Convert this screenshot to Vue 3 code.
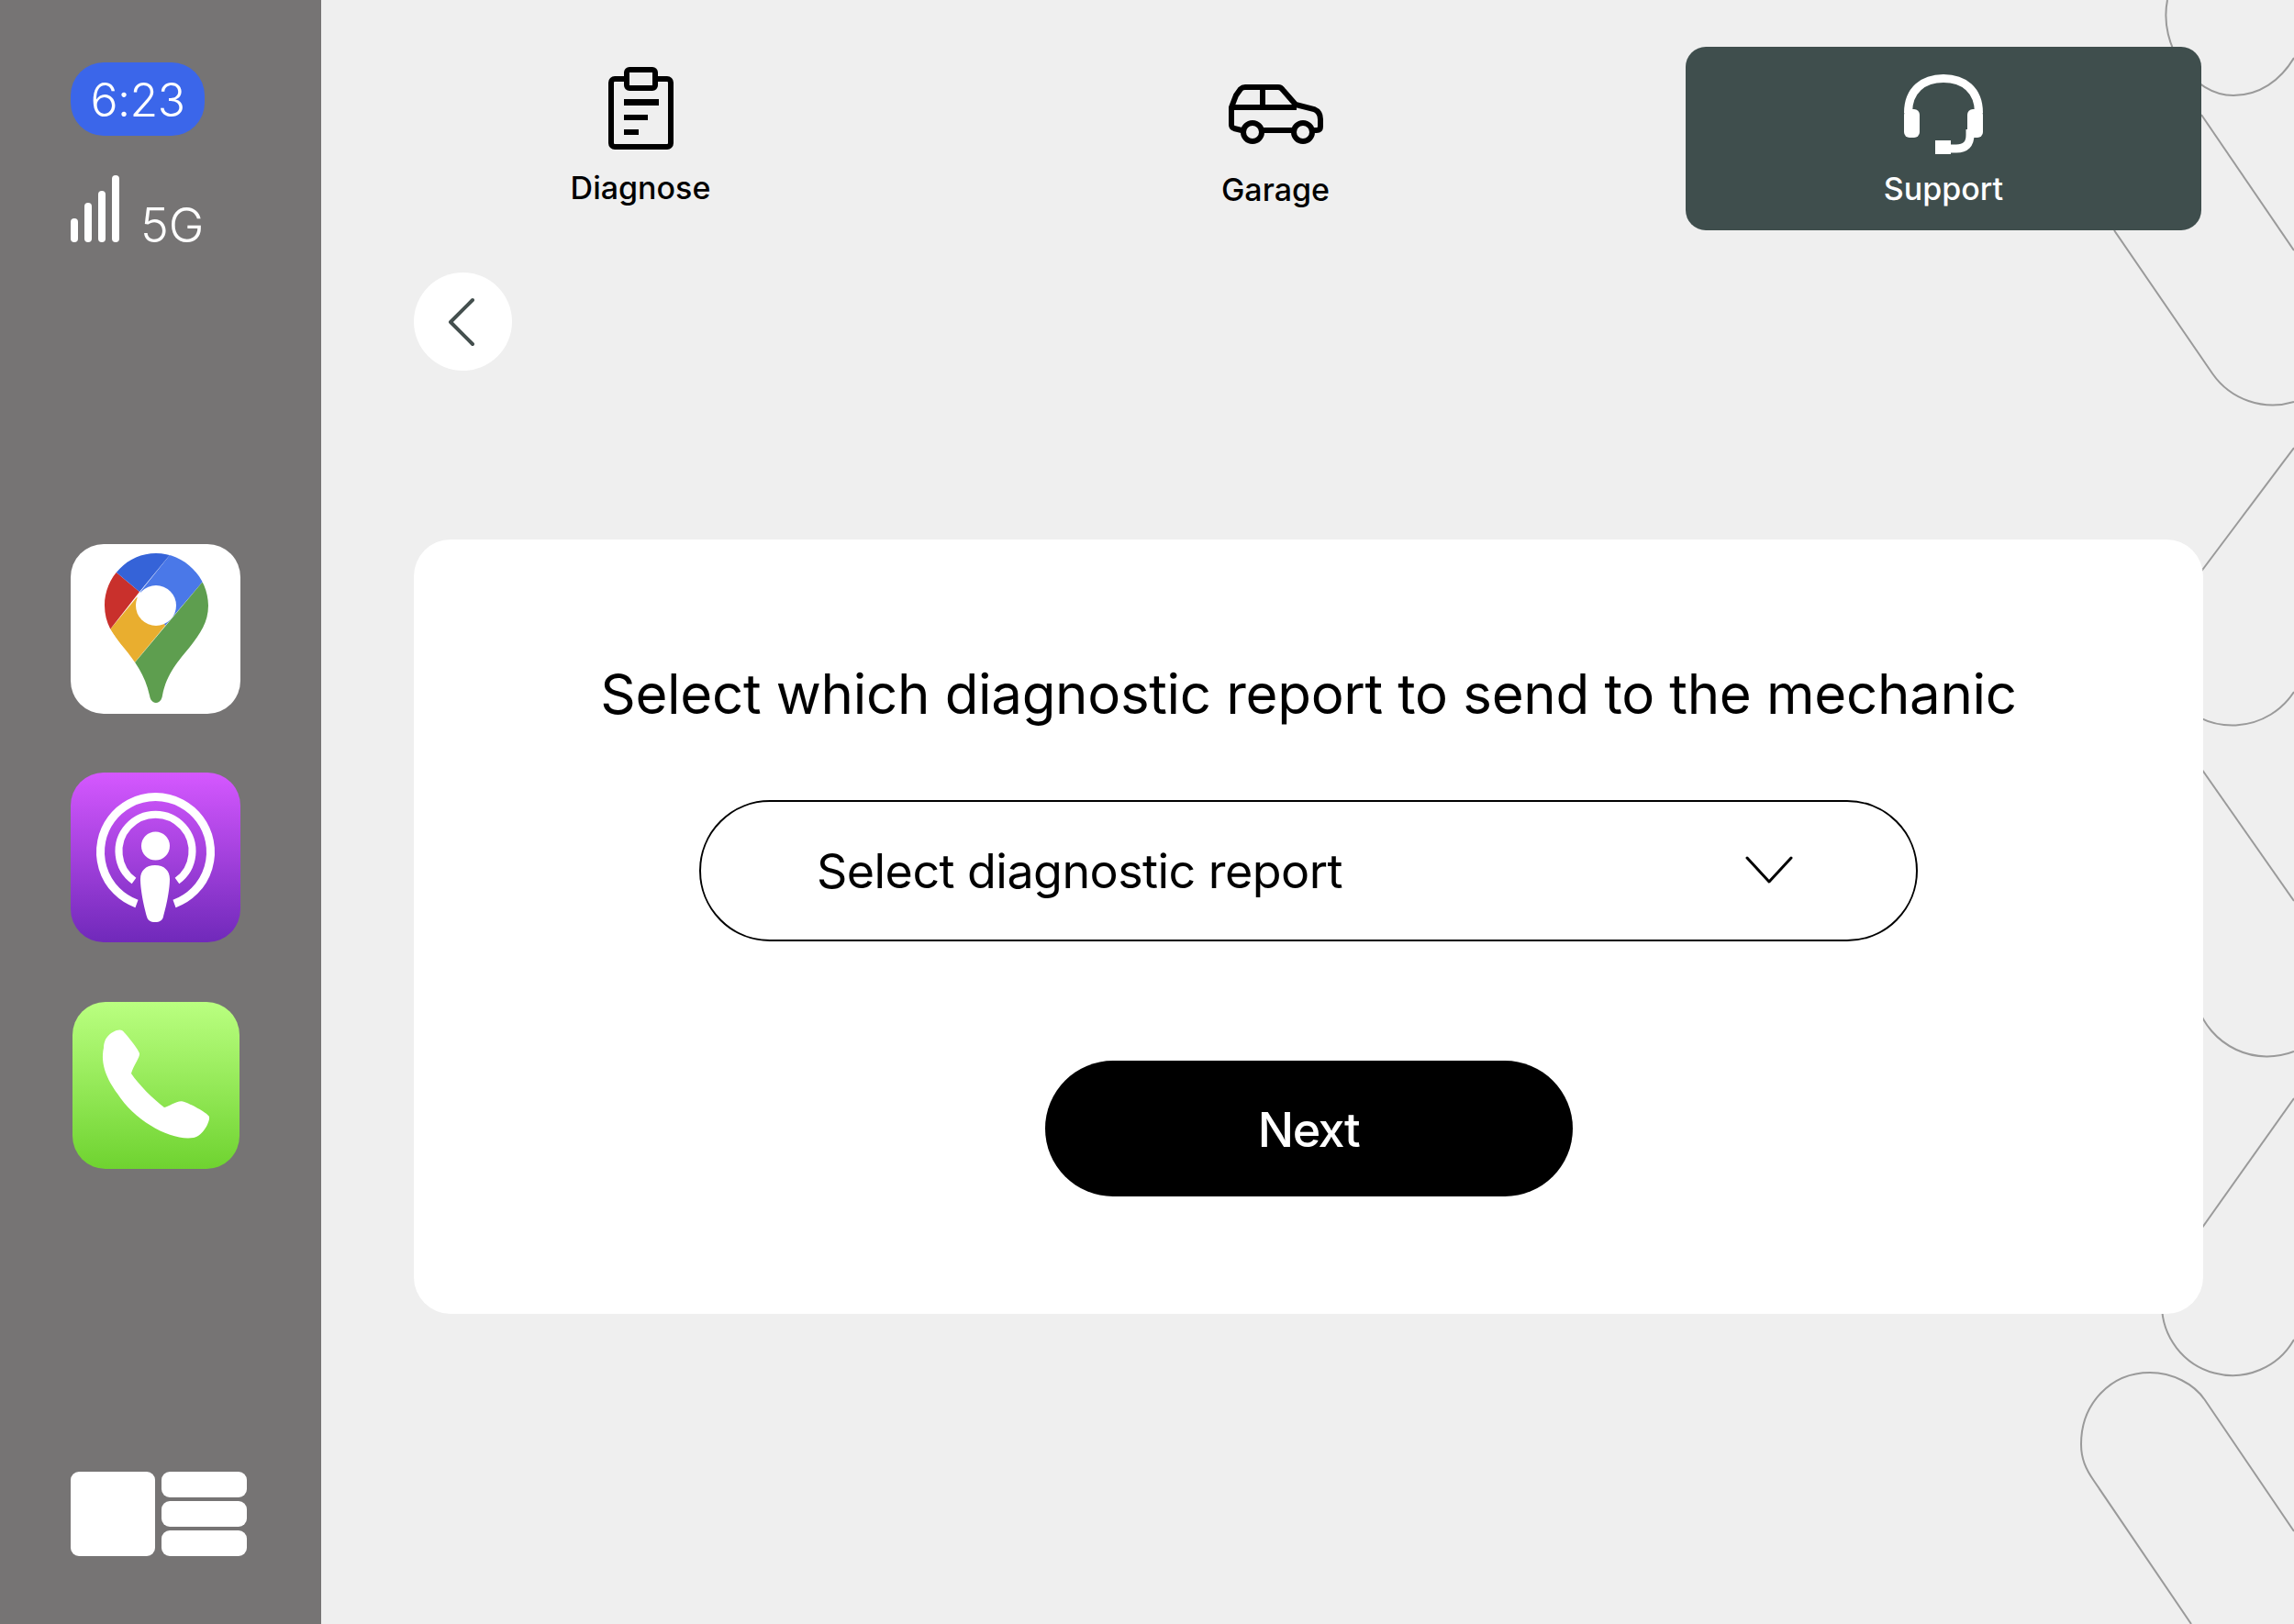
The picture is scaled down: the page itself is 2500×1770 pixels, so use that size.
<template>
  <div class="screen">
    <!-- decorative outlines behind everything -->
    <svg class="bg-lines" viewBox="0 0 2500 1770" fill="none" stroke="#9a9a9a" stroke-width="2">
      <path d="M2362 0 C2352 50 2390 104 2434 104 C2462 104 2485 88 2500 63" />
      <path d="M2304 251 L2411 407 A80 80 0 0 0 2500 438" />
      <path d="M2399 125 L2500 273" />
      <path d="M2395 628 L2500 488" />
      <path d="M2370 760 A80 80 0 0 0 2500 754" />
      <path d="M2395 832 L2500 982" />
      <path d="M2395 1097 A80 80 0 0 0 2500 1146" />
      <path d="M2395 1345 L2500 1197" />
      <path d="M2356 1422 A77 77 0 0 0 2500 1460" />
      <path d="M2500 1669 L2403 1526 C2391 1508 2367 1496 2343 1496 C2300 1496 2268 1530 2268 1574 C2268 1590 2273 1601 2282 1614 L2388 1770" />
    </svg>

    <aside class="sidebar">
      <div class="time">6:23</div>
      <div class="signal">
        <div class="bars">
          <span class="bar b1"></span>
          <span class="bar b2"></span>
          <span class="bar b3"></span>
          <span class="bar b4"></span>
        </div>
        <span class="net">5G</span>
      </div>

      <div class="app app-maps">
        <svg viewBox="0 0 185 185" width="185" height="185">
          <defs>
            <clipPath id="pin">
              <path d="M93 10 C124 10 150 36 150 67 C150 85 141 98 130 112 C118 127 105 140 100 165 C99 171 96 173 93 173 C90 173 87 171 86 165 C81 142 70 128 58 113 C46 99 37 86 37 67 C37 36 62 10 93 10 Z" />
            </clipPath>
          </defs>
          <g clip-path="url(#pin)">
            <polygon points="108,12 76,52 103,89 143,42 160,30 160,0 108,0" fill="#4a78e8" />
            <polygon points="72,58 43,93 69,130 103,89 93,67" fill="#e9ae2f" />
            <polygon points="50,31 75,52 43,93 20,90 20,20" fill="#c9302c" />
            <polygon points="50,31 75,52 108,12 108,0 30,0" fill="#3563d8" />
            <polygon points="143,42 60,141 60,200 170,200 170,40" fill="#5e9e4f" />
          </g>
          <circle cx="93" cy="67" r="22" fill="#fff" />
        </svg>
      </div>

      <div class="app app-podcast">
        <svg viewBox="0 0 185 185" width="185" height="185" fill="none" stroke="#fff">
          <path d="M72 143 A60 60 0 1 1 113 143" stroke-width="9" />
          <path d="M69 118 A40 40 0 1 1 116 118" stroke-width="8" />
          <circle cx="92.5" cy="80" r="15.5" fill="#fff" stroke="none" />
          <path d="M92 101 C102 101 108 107 108 116 C108 130 103 150 101 157 C100 161 97 163 92 163 C87 163 84 161 83 157 C81 150 76 130 76 116 C76 107 82 101 92 101 Z" fill="#fff" stroke="none" />
        </svg>
      </div>

      <div class="app app-phone">
        <svg viewBox="0 0 182 182" width="182" height="182">
          <path d="M38 38 C42 33 50 29 54 31 C56 32 71 50 73 56 C74 60 66 70 64 78 C72 90 88 106 100 115 C106 114 115 106 122 109 C128 111 146 120 149 125 C150 131 142 146 132 148 C108 152 68 130 49 100 C38 85 30 68 34 50 C34 45 36 40 38 38 Z" fill="#fff" />
        </svg>
      </div>

      <div class="dash">
        <span class="dash-main"></span>
        <div class="dash-rows">
          <span></span>
          <span></span>
          <span></span>
        </div>
      </div>
    </aside>

    <main class="content">
      <nav class="tabs">
        <div class="tab">
          <svg class="tab-icon" viewBox="0 0 71 90" width="71" height="90">
            <rect x="3" y="13" width="65" height="74" rx="4" fill="none" stroke="#000" stroke-width="6" />
            <rect x="20" y="3" width="31" height="20" rx="3" fill="#efefef" stroke="#000" stroke-width="6" />
            <rect x="17" y="35" width="38" height="7" />
            <rect x="17" y="52" width="26" height="6" />
            <rect x="17" y="68" width="16" height="6" />
          </svg>
          <span class="label diag">Diagnose</span>
        </div>
        <div class="tab">
          <svg class="tab-icon car" viewBox="0 0 103 65" width="103" height="65" fill="none" stroke="#000" stroke-width="6">
            <path d="M14 50 L6 48 Q3 47 3 44 V25 L8 12 L13 5 Q15 3 18 3 H54 Q57 3 59 6 L73 22 L93 27 Q100 30 100 38 V46 Q100 50 96 50 H93" />
            <path d="M38 50 H69 M3 25 H74 M37 3 V25" />
            <circle cx="26" cy="52" r="10" />
            <circle cx="81" cy="52" r="10" />
          </svg>
          <span class="label garage">Garage</span>
        </div>
        <div class="tab active">
          <svg class="tab-icon" viewBox="0 0 86 87" width="86" height="87" fill="none" stroke="#fff">
            <path d="M4.5 42 C4.5 17 21 4.5 43 4.5 C65 4.5 81.5 17 81.5 42" stroke-width="9" />
            <rect x="0" y="38" width="17" height="31" rx="6" fill="#fff" stroke="none" />
            <rect x="69" y="38" width="17" height="31" rx="6" fill="#fff" stroke="none" />
            <path d="M72 60 V66 Q72 81 57 81 H45" stroke-width="9" />
            <rect x="34" y="72" width="17" height="15" fill="#fff" stroke="none" />
          </svg>
          <span class="label">Support</span>
        </div>
      </nav>

      <button class="back" type="button">
        <svg viewBox="0 0 30 54" width="30" height="54" fill="none" stroke="#444f4e" stroke-width="4" stroke-linecap="round" stroke-linejoin="round">
          <path d="M27 3 L3 27 L27 51" />
        </svg>
      </button>

      <section class="card">
        <h1>Select which diagnostic report to send to the mechanic</h1>
        <div class="select">
          <span>Select diagnostic report</span>
          <svg viewBox="0 0 52 30" width="52" height="30" fill="none" stroke="#000" stroke-width="3" stroke-linecap="round" stroke-linejoin="round">
            <path d="M2 2 L26 28 L50 2" />
          </svg>
        </div>
        <button class="next" type="button">Next</button>
      </section>
    </main>
  </div>
</template>

<script setup>
</script>

<style>
html, body { margin: 0; background: #efefef; }
</style>

<style scoped>
.screen { position: relative; display: flex; width: 2500px; height: 1770px; overflow: hidden; background: #efefef; font-family: Inter, "Liberation Sans", sans-serif; color: #000; }
.bg-lines { position: absolute; left: 0; top: 0; width: 2500px; height: 1770px; }

.sidebar { position: relative; flex: none; display: flex; flex-direction: column; box-sizing: border-box; width: 350px; height: 100%; padding: 68px 0 74px 77px; background: #767474; color: #fff; }
.time { width: 146px; height: 80px; border-radius: 36px; background: #3b66ea; font-size: 50px; font-weight: 350; line-height: 82px; letter-spacing: -0.5px; text-align: center; }
.signal { display: flex; align-items: flex-end; gap: 23px; margin-top: 43px; height: 73px; }
.bars { display: flex; align-items: flex-end; gap: 7px; }
.bar { width: 8px; border-radius: 4px; background: #fff; }
.b1 { height: 26px; }
.b2 { height: 43px; }
.b3 { height: 56px; }
.b4 { height: 73px; }
.net { font-size: 52px; font-weight: 350; line-height: 36px; }

.app { width: 185px; height: 185px; border-radius: 36px; overflow: hidden; }
.app svg { display: block; }
.app-maps { margin-top: 329px; background: #fff; }
.app-podcast { margin-top: 64px; background: linear-gradient(#d558ff, #7029ba); }
.app-phone { width: 182px; height: 182px; margin: 65px 0 0 2px; background: linear-gradient(#baff80, #6fd330); }

.dash { display: flex; gap: 7px; margin-top: auto; }
.dash-main { width: 92px; height: 92px; border-radius: 9px; background: #fff; }
.dash-rows { display: flex; flex-direction: column; gap: 4px; }
.dash-rows span { width: 93px; height: 28px; border-radius: 9px; background: #fff; }

.content { position: relative; display: flex; flex-direction: column; padding: 51px 0 0 101px; }
.tabs { display: flex; gap: 130px; margin-left: -34px; }
.tab { display: flex; flex-direction: column; align-items: center; width: 562px; height: 200px; border-radius: 22px; }
.tab-icon { display: block; margin-top: 22px; }
.tab-icon.car { margin-top: 41px; }
.label { margin-top: 19px; font-size: 34px; font-weight: 450; line-height: 42px; }
.label.diag { margin-top: 21px; }
.label.garage { margin-top: 29px; }
.active { margin-left: 36px; background: #3f4e4d; color: #fff; }
.active .tab-icon { margin-top: 30px; }
.active .label { margin-top: 17px; }

.back { display: flex; align-items: center; justify-content: center; width: 107px; height: 107px; margin-top: 46px; padding: 0 4px 0 0; border: none; border-radius: 50%; background: #fff; }

.card { display: flex; flex-direction: column; align-items: center; box-sizing: border-box; width: 1950px; height: 844px; margin-top: 184px; padding-top: 132px; border-radius: 40px; background: #fff; }
h1 { margin: 0; font-size: 60px; font-weight: 400; line-height: 72px; letter-spacing: -0.32px; white-space: nowrap; }
.select { display: flex; align-items: center; justify-content: space-between; box-sizing: border-box; width: 1328px; height: 154px; margin-top: 80px; padding: 0 134px 0 126px; border: 2px solid #000; border-radius: 77px; font-size: 52px; letter-spacing: -0.55px; }
.select svg { margin-top: -3px; }
.next { width: 575px; height: 148px; margin-top: 130px; padding-top: 4px; border: none; border-radius: 74px; background: #000; color: #fff; font-family: inherit; font-size: 52px; font-weight: 500; letter-spacing: -1.5px; }
</style>
